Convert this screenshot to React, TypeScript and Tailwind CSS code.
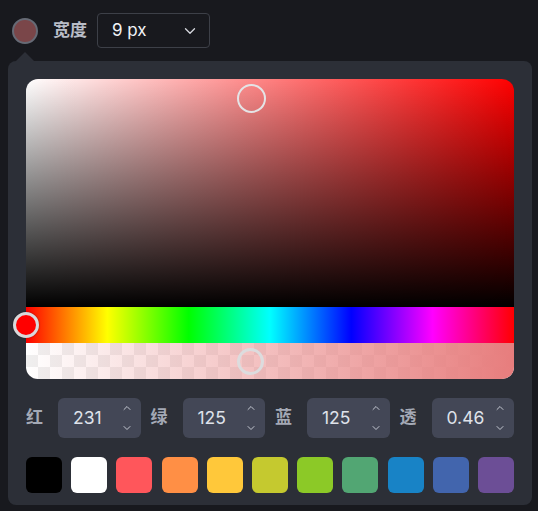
import { ChevronDown, ChevronUp } from "lucide-react";

const swatches = [
  "bg-[#000000]",
  "bg-[#ffffff]",
  "bg-[#ff565b]",
  "bg-[#ff8f45]",
  "bg-[#ffc83a]",
  "bg-[#c5c92f]",
  "bg-[#8cc927]",
  "bg-[#52a673]",
  "bg-[#1883c6]",
  "bg-[#4265ad]",
  "bg-[#6c4e96]",
];

const channels = [
  { label: "红", value: "231" },
  { label: "绿", value: "125" },
  { label: "蓝", value: "125" },
  { label: "透", value: "0.46" },
];

function NumberField({ label, value }: { label: string; value: string }) {
  return (
    <div className="flex items-center gap-[15px]">
      <span className="w-[17px] text-[17px] font-bold text-[#a4a9b5]">{label}</span>
      <div className="relative flex h-[40px] flex-1 items-center rounded-[6px] bg-[#434756] pl-[15px] text-[17.5px] text-[#dfe2ea]">
        {value}
        <div className="absolute right-[8px] top-0 flex h-full flex-col items-center justify-center gap-[8px] text-[#c3c7d1]">
          <ChevronUp size={12} strokeWidth={2} />
          <ChevronDown size={12} strokeWidth={2} />
        </div>
      </div>
    </div>
  );
}

export default function App() {
  return (
    <div className="min-h-[511px] w-[538px] bg-[#18191e] font-['Inter','Noto_Sans_CJK_SC',sans-serif]">
      <div className="flex items-center pl-[12px] pt-[13px]">
        <div className="h-[26px] w-[26px] rounded-full border-2 border-[#666a75] bg-[#7a4649]" />
        <span className="ml-[15px] text-[17px] font-bold text-[#b9bdc7]">宽度</span>
        <div className="ml-[10px] flex h-[35px] w-[113px] items-center justify-between rounded-[4px] border border-[#3d4048] pl-[14px] pr-[10px] text-[17px] text-[#f2f3f6]">
          9 px
          <ChevronDown size={18} strokeWidth={1.75} className="text-[#d6d8de]" />
        </div>
      </div>

      <div className="relative ml-[8px] mt-[13px] w-[524px] rounded-[8px] bg-[#2c2f37] px-[18px] pb-[12px] pt-[18px]">
        <div className="absolute -top-[9px] left-[8px] h-0 w-0 border-x-[9px] border-b-[9px] border-x-transparent border-b-[#2c2f37]" />

        <div className="relative h-[228px] rounded-t-[12px] bg-[image:linear-gradient(to_top,#000,transparent),linear-gradient(to_right,#fff,#f00)]">
          <div className="absolute left-[211px] top-[5px] h-[29px] w-[29px] rounded-full border-2 border-[#e4e4e6]" />
        </div>

        <div className="relative h-[36px] bg-[linear-gradient(to_right,#f00,#ff0,#0f0,#0ff,#00f,#f0f,#f00)]">
          <div className="absolute -left-[13px] top-[5px] h-[26px] w-[26px] rounded-full border-[3px] border-[#d9d9db] bg-[#ff0000] shadow-[0_0_2px_rgba(0,0,0,0.4)]" />
        </div>

        <div className="relative h-[36px] overflow-hidden rounded-b-[12px] bg-[image:repeating-conic-gradient(#efefef_0_25%,#ffffff_0_50%)] bg-[length:24px_24px]">
          <div className="absolute inset-0 bg-[linear-gradient(to_right,rgba(231,125,125,0),rgb(231,125,125))]" />
          <div className="absolute left-[211px] top-[5px] h-[27px] w-[27px] rounded-full border-[3px] border-[#dcdcde]" />
        </div>

        <div className="mt-[19px] grid grid-cols-4 gap-[10px]">
          {channels.map((c) => (
            <NumberField key={c.label} label={c.label} value={c.value} />
          ))}
        </div>

        <div className="mt-[19px] flex justify-between">
          {swatches.map((s) => (
            <div key={s} className={`h-[36px] w-[36px] rounded-[6px] ${s}`} />
          ))}
        </div>
      </div>
    </div>
  );
}
